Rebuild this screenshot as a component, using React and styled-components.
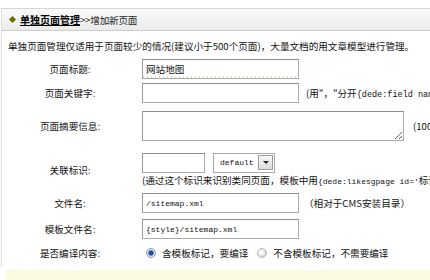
import React from "react";
import styled, { createGlobalStyle } from "styled-components";

const GlobalStyle = createGlobalStyle`
  * { box-sizing: border-box; }
  html, body { margin: 0; padding: 0; background: #fff; overflow: hidden; }
  body {
    font-family: "Noto Sans CJK SC", "Noto Sans", sans-serif;
    font-size: 9.6px;
    color: #111;
  }
`;

const Page = styled.div`
  width: 430px;
  height: 280px;
  padding-top: 8px;
  overflow: hidden;
`;

const Frame = styled.div`
  margin-left: 1px;
  border-left: 1px solid #dedede;
  padding-bottom: 2px;
`;

const HeaderBar = styled.div`
  height: 23px;
  display: flex;
  align-items: center;
  padding-left: 8px;
  border-top: 1px solid #d6d6d6;
  border-bottom: 1px solid #cdcdcd;
  background: linear-gradient(#fbfbfb, #ebebeb);
  white-space: nowrap;
`;

const Diamond = styled.span`
  width: 5px;
  height: 5px;
  background: #6f6c00;
  transform: rotate(45deg);
  margin-right: 5px;
  flex: none;
`;

const Crumb = styled.span`
  font-weight: bold;
  font-size: 10px;
  text-decoration: underline;
  text-underline-offset: 1px;
  color: #000;
`;

const CrumbTail = styled.span`
  color: #222;
  letter-spacing: -0.2px;
`;

const Intro = styled.div`
  height: 27px;
  padding: 9px 0 0 6px;
  line-height: 13px;
  white-space: nowrap;
`;

const Field = styled.div`
  display: grid;
  grid-template-columns: 136px 1fr;
  align-items: center;
  height: ${(p) => p.$h}px;
  margin-top: ${(p) => p.$mt || 0}px;
`;

const Label = styled.div`
  text-align: center;
  white-space: nowrap;
  color: #111;
`;

const Cell = styled.div`
  display: flex;
  align-items: center;
  padding-left: 4px;
  white-space: nowrap;
  min-width: 0;
`;

const Stack = styled.div`
  display: flex;
  flex-direction: column;
  padding-left: 4px;
  white-space: nowrap;
`;

const Line = styled.div`
  display: flex;
  align-items: center;
  height: ${(p) => p.$h}px;
  gap: ${(p) => p.$gap || 0}px;
`;

const TextInput = styled.input`
  width: ${(p) => p.$w}px;
  height: ${(p) => p.$h || 20}px;
  border: 1px solid #ababab;
  border-top-color: #8e8e8e;
  border-left-color: #9a9a9a;
  padding: 0 3px;
  margin: 0;
  flex: none;
  outline: none;
  color: #111;
  font-family: ${(p) =>
    p.$mono ? '"Liberation Mono", monospace' : '"Noto Sans CJK SC", sans-serif'};
  font-size: ${(p) => (p.$mono ? "8px" : "9.6px")};
  background-color: #fff;
  background-image: ${(p) =>
    p.$ruler
      ? "repeating-linear-gradient(90deg, #cfe6c2 0 1px, transparent 1px 4px)"
      : "none"};
  background-size: 100% 2px;
  background-position: 0 100%;
  background-repeat: no-repeat;
`;

const TextArea = styled.textarea`
  width: 262px;
  height: 30px;
  border: 1px solid #ababab;
  border-top-color: #8e8e8e;
  border-left-color: #9a9a9a;
  margin: 0;
  padding: 2px;
  flex: none;
  outline: none;
  font-family: "Noto Sans CJK SC", sans-serif;
  font-size: 9.6px;
`;

const Note = styled.span`
  margin-left: ${(p) => p.$ml}px;
  color: #111;
`;

const Code = styled.span`
  font-family: "Liberation Mono", monospace;
  font-size: ${(p) => p.$size || 8}px;
`;

const SelectBox = styled.div`
  width: 62px;
  height: 20px;
  border: 1px solid #a9a9a9;
  display: flex;
  align-items: center;
  justify-content: space-between;
  padding: 0 1px 0 6px;
  background: #fff;
  flex: none;
`;

const SelectText = styled.span`
  font-family: "Liberation Mono", monospace;
  font-size: 8px;
  color: #111;
`;

const DropButton = styled.span`
  width: 15px;
  height: 15px;
  border: 1px solid #9c9c9c;
  background: linear-gradient(#f7f7f7, #dcdcdc);
  display: flex;
  align-items: center;
  justify-content: center;
`;

const Caret = styled.span`
  width: 0;
  height: 0;
  border-left: 3px solid transparent;
  border-right: 3px solid transparent;
  border-top: 3px solid #222;
`;

const Hint = styled.div`
  height: 14px;
  line-height: 14px;
`;

const Radio = styled.span`
  width: 10px;
  height: 10px;
  border-radius: 50%;
  flex: none;
  margin-left: ${(p) => p.$ml}px;
  margin-right: 6px;
  border: 1px solid ${(p) => (p.$on ? "#8a9aaa" : "#b8b8b8")};
  background: ${(p) =>
    p.$on
      ? "radial-gradient(circle at 50% 50%, #1d4f9c 0 2px, #6e97cf 2.6px, #e6eef8 3.4px, #dcdcdc 5px)"
      : "radial-gradient(circle at 40% 40%, #ffffff 0 1px, #e9e9e9 3px, #cfcfcf 5px)"};
`;

const RadioText = styled.span`
  color: #111;
`;

const SubmitBand = styled.div`
  margin: 4px 0 0 6px;
  height: 20px;
  background: #fbfbe3;
`;

export default function App() {
  return (
    <>
      <GlobalStyle />
      <Page>
        <Frame>
          <HeaderBar>
            <Diamond />
            <Crumb>单独页面管理</Crumb>
            <CrumbTail>&gt;&gt;增加新页面</CrumbTail>
          </HeaderBar>
          <Intro>
            单独页面管理仅适用于页面较少的情况(建议小于500个页面)，大量文档的用文章模型进行管理。
          </Intro>

          <Field $h={22}>
            <Label>页面标题:</Label>
            <Cell>
              <TextInput $w={157} $ruler readOnly value="网站地图" />
            </Cell>
          </Field>

          <Field $h={22} $mt={2}>
            <Label>页面关键字:</Label>
            <Cell>
              <TextInput $w={157} readOnly value="" />
              <Note $ml={7}>
                (用"，"分开<Code $size={8.5}>{"{dede:field name"}</Code>
              </Note>
            </Cell>
          </Field>

          <Field $h={32} $mt={6}>
            <Label>页面摘要信息:</Label>
            <Cell>
              <TextArea readOnly value="" />
              <Note $ml={9}>(100字以内)</Note>
            </Cell>
          </Field>

          <Field $h={34} $mt={10}>
            <Label>关联标识:</Label>
            <Stack>
              <Line $h={21} $gap={8}>
                <TextInput $w={63} readOnly value="" />
                <SelectBox>
                  <SelectText>default</SelectText>
                  <DropButton>
                    <Caret />
                  </DropButton>
                </SelectBox>
              </Line>
              <Hint>
                (通过这个标识来识别类同页面，模板中用
                <Code $size={8}>{"{dede:likesgpage id='"}</Code>标识'/}
              </Hint>
            </Stack>
          </Field>

          <Field $h={22} $mt={6}>
            <Label>文件名:</Label>
            <Cell>
              <TextInput $w={157} $mono readOnly value="/sitemap.xml" />
              <Note $ml={5}>（相对于CMS安装目录）</Note>
            </Cell>
          </Field>

          <Field $h={22} $mt={4}>
            <Label>模板文件名:</Label>
            <Cell>
              <TextInput $w={157} $mono readOnly value="{style}/sitemap.xml" />
            </Cell>
          </Field>

          <Field $h={22} $mt={2}>
            <Label>是否编译内容:</Label>
            <Cell>
              <Radio $on $ml={4} />
              <RadioText>含模板标记，要编译</RadioText>
              <Radio $ml={9} />
              <RadioText>不含模板标记，不需要编译</RadioText>
            </Cell>
          </Field>
        </Frame>
        <SubmitBand />
      </Page>
    </>
  );
}
